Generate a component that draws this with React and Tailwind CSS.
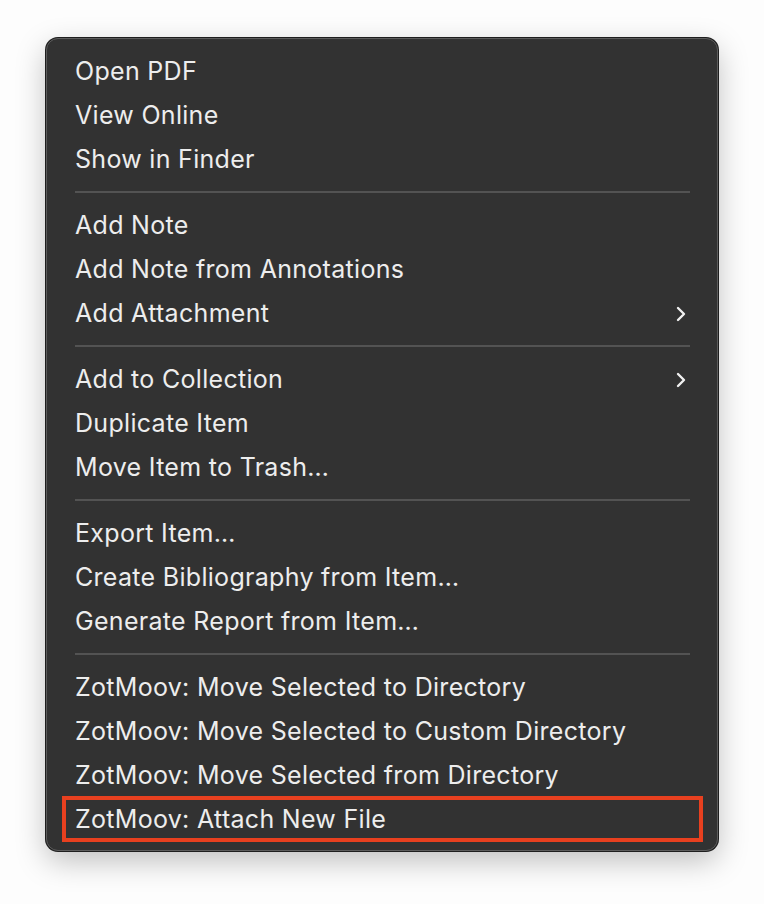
import React from 'react';

const groups = [
    [{ label: 'Open PDF' }, { label: 'View Online' }, { label: 'Show in Finder' }],
    [{ label: 'Add Note' }, { label: 'Add Note from Annotations' }, { label: 'Add Attachment', sub: true }],
    [{ label: 'Add to Collection', sub: true }, { label: 'Duplicate Item' }, { label: 'Move Item to Trash…' }],
    [{ label: 'Export Item…' }, { label: 'Create Bibliography from Item…' }, { label: 'Generate Report from Item…' }],
    [
        { label: 'ZotMoov: Move Selected to Directory' },
        { label: 'ZotMoov: Move Selected to Custom Directory' },
        { label: 'ZotMoov: Move Selected from Directory' },
        { label: 'ZotMoov: Attach New File', marked: true },
    ],
];

const Chevron = () => (
    <svg width="12" height="18" viewBox="0 0 12 18" fill="none" className="shrink-0">
        <path d="M3 3l6 6-6 6" stroke="#f0f0f0" strokeWidth="2.4" strokeLinecap="round" strokeLinejoin="round" />
    </svg>
);

const MenuRow = ({ label, sub, marked }) => (
    <div className="relative h-[44px] flex items-center justify-between pl-[28px] pr-[30px]">
        <span>{label}</span>
        {sub && <Chevron />}
        {marked && (
            <div className="absolute left-[15px] right-[14px] top-[-2px] bottom-0 border-4 border-[#e8401f]" />
        )}
    </div>
);

const App = () => {
    return (
        <div className="w-[764px] h-[904px] bg-[#fdfdfd] pt-[38px] pl-[46px]">
            <div
                className="w-[672px] rounded-[12px] bg-[#323232] border border-[#5c5c5c] ring-1 ring-[#1e1e1e] shadow-[0_10px_30px_rgba(0,0,0,0.25)] pt-[11px] pb-[8px] text-[#ededed] text-[25px] tracking-[0.3px] font-normal"
                style={{ fontFamily: 'Inter, "Liberation Sans", sans-serif' }}
            >
                {groups.map((group, gi) => (
                    <div key={gi}>
                        {gi > 0 && (
                            <div className="h-[22px] pt-[9px] pl-[28px] pr-[27px]">
                                <div className="h-[2px] w-full bg-[#535353]" />
                            </div>
                        )}
                        {group.map((item) => (
                            <MenuRow key={item.label} {...item} />
                        ))}
                    </div>
                ))}
            </div>
        </div>
    );
};

export default App;
